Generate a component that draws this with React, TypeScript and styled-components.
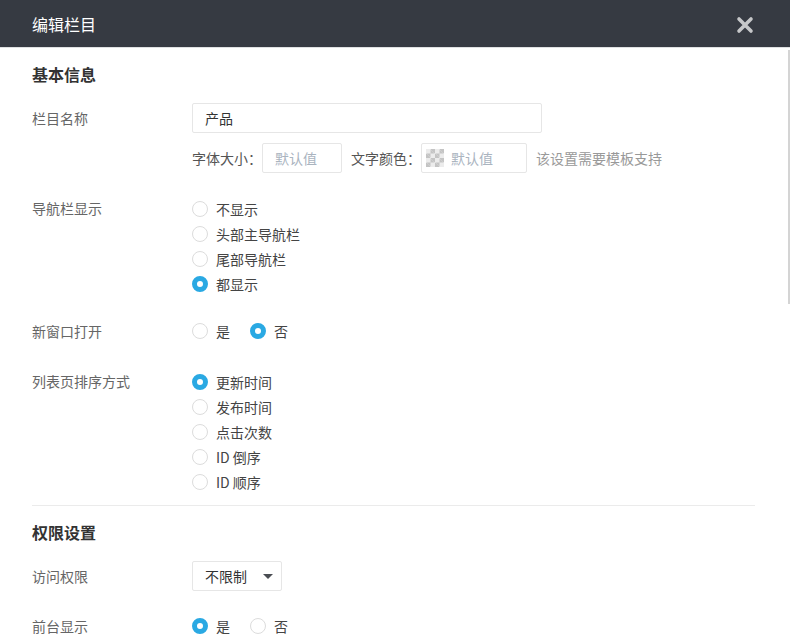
import React from "react";
import styled, { createGlobalStyle } from "styled-components";

const GlobalStyle = createGlobalStyle`
  html, body {
    margin: 0;
    padding: 0;
    background: #fff;
  }
  body {
    font-family: "Noto Sans CJK SC", "Noto Sans", sans-serif;
    font-size: 14px;
    color: #333;
  }
`;

const Modal = styled.div`
  width: 790px;
  height: 643px;
  overflow: hidden;
  display: flex;
  flex-direction: column;
`;

const Header = styled.div`
  height: 47px;
  flex-shrink: 0;
  background: #363a42;
  border-bottom: 1px solid #dfe0e2;
  display: flex;
  align-items: center;
  justify-content: space-between;
  padding: 0 36px 0 32px;
`;

const HeaderTitle = styled.div`
  color: #fff;
  font-size: 16px;
`;

const CloseButton = styled.button`
  border: 0;
  background: none;
  padding: 0;
  width: 18px;
  height: 18px;
  display: flex;
  cursor: pointer;
  margin-top: 2px;
`;

const Body = styled.div`
  position: relative;
  flex: 1;
  padding: 0 35px 0 32px;
`;

const ScrollThumb = styled.div`
  position: absolute;
  right: 0;
  top: 2px;
  width: 2px;
  height: 254px;
  background: #d4d4d4;
`;

const Section = styled.div<{ $divider?: boolean }>`
  border-bottom: ${(p) => (p.$divider ? "1px solid #ebebeb" : "none")};
`;

const SectionTitle = styled.div`
  height: 55px;
  line-height: 52px;
  font-size: 16px;
  font-weight: bold;
  color: #333;
`;

const Fields = styled.div`
  display: flex;
  flex-direction: column;
  gap: 20px;
  padding-bottom: 11px;
`;

const Row = styled.div`
  display: flex;
  align-items: flex-start;
`;

const Label = styled.div`
  width: 160px;
  flex-shrink: 0;
  line-height: 30px;
  color: #666;
`;

const Control = styled.div`
  display: flex;
  flex-direction: column;
`;

const TextInput = styled.div<{ $width: number; $placeholder?: boolean }>`
  box-sizing: border-box;
  width: ${(p) => p.$width}px;
  height: 30px;
  border: 1px solid #e6e6e6;
  border-radius: 2px;
  padding: 0 12px;
  display: flex;
  align-items: center;
  color: ${(p) => (p.$placeholder ? "#aab4bf" : "#333")};
`;

const SubLine = styled.div`
  display: flex;
  align-items: center;
  margin-top: 10px;
  color: #555;
`;

const SubLabel = styled.span<{ $first?: boolean }>`
  margin-left: ${(p) => (p.$first ? 0 : 9)}px;
`;

const ColorBox = styled.div`
  box-sizing: border-box;
  width: 106px;
  height: 30px;
  border: 1px solid #e6e6e6;
  border-radius: 2px;
  padding: 0 4px;
  display: flex;
  align-items: center;
  gap: 7px;
  color: #aab4bf;
`;

const Checker = styled.div`
  width: 18px;
  height: 18px;
  background-color: #ececec;
  background-image: linear-gradient(45deg, #c4c4c4 25%, transparent 25%, transparent 75%, #c4c4c4 75%),
    linear-gradient(45deg, #c4c4c4 25%, transparent 25%, transparent 75%, #c4c4c4 75%);
  background-size: 9px 9px;
  background-position: 0 0, 4.5px 4.5px;
`;

const Hint = styled.span`
  margin-left: 9px;
  color: #999;
`;

const RadioList = styled.div`
  display: flex;
  flex-direction: column;
  padding-top: 3px;
`;

const RadioInline = styled.div`
  display: flex;
  gap: 20px;
  height: 30px;
  align-items: center;
`;

const RadioItem = styled.label`
  display: flex;
  align-items: center;
  height: 25px;
  color: #444;
  cursor: pointer;
`;

const RadioDot = styled.span<{ $checked?: boolean }>`
  box-sizing: border-box;
  width: 16px;
  height: 16px;
  border-radius: 50%;
  margin-right: 8px;
  border: ${(p) => (p.$checked ? "5px solid #2aa9e3" : "1px solid #dcdcdc")};
  background: #fff;
`;

const Select = styled.div`
  box-sizing: border-box;
  width: 90px;
  height: 30px;
  border: 1px solid #e6e6e6;
  border-radius: 2px;
  padding: 0 8px 0 12px;
  display: flex;
  align-items: center;
  justify-content: space-between;
  color: #333;
`;

const Caret = styled.span`
  width: 0;
  height: 0;
  border-left: 5px solid transparent;
  border-right: 5px solid transparent;
  border-top: 5px solid #4a4d53;
`;

type RadioProps = { options: string[]; value: string; inline?: boolean };

const RadioGroup = ({ options, value, inline }: RadioProps) => {
  const items = options.map((opt) => (
    <RadioItem key={opt}>
      <RadioDot $checked={opt === value} />
      {opt}
    </RadioItem>
  ));
  return inline ? <RadioInline>{items}</RadioInline> : <RadioList>{items}</RadioList>;
};

const App = () => {
  return (
    <Modal>
      <GlobalStyle />
      <Header>
        <HeaderTitle>编辑栏目</HeaderTitle>
        <CloseButton aria-label="关闭">
          <svg width="18" height="18" viewBox="0 0 18 18">
            <path d="M3 3L15 15M15 3L3 15" stroke="#c6c7c9" strokeWidth="3.6" strokeLinecap="round" />
          </svg>
        </CloseButton>
      </Header>
      <Body>
        <ScrollThumb />
        <Section $divider>
          <SectionTitle>基本信息</SectionTitle>
          <Fields>
            <Row>
              <Label>栏目名称</Label>
              <Control>
                <TextInput $width={350}>产品</TextInput>
                <SubLine>
                  <SubLabel $first>字体大小：</SubLabel>
                  <TextInput $width={80} $placeholder>
                    默认值
                  </TextInput>
                  <SubLabel>文字颜色：</SubLabel>
                  <ColorBox>
                    <Checker />
                    默认值
                  </ColorBox>
                  <Hint>该设置需要模板支持</Hint>
                </SubLine>
              </Control>
            </Row>
            <Row>
              <Label>导航栏显示</Label>
              <RadioGroup options={["不显示", "头部主导航栏", "尾部导航栏", "都显示"]} value="都显示" />
            </Row>
            <Row>
              <Label>新窗口打开</Label>
              <RadioGroup options={["是", "否"]} value="否" inline />
            </Row>
            <Row>
              <Label>列表页排序方式</Label>
              <RadioGroup
                options={["更新时间", "发布时间", "点击次数", "ID 倒序", "ID 顺序"]}
                value="更新时间"
              />
            </Row>
          </Fields>
        </Section>
        <Section>
          <SectionTitle>权限设置</SectionTitle>
          <Fields>
            <Row>
              <Label>访问权限</Label>
              <Select>
                不限制
                <Caret />
              </Select>
            </Row>
            <Row>
              <Label>前台显示</Label>
              <RadioGroup options={["是", "否"]} value="是" inline />
            </Row>
          </Fields>
        </Section>
      </Body>
    </Modal>
  );
};

export default App;
